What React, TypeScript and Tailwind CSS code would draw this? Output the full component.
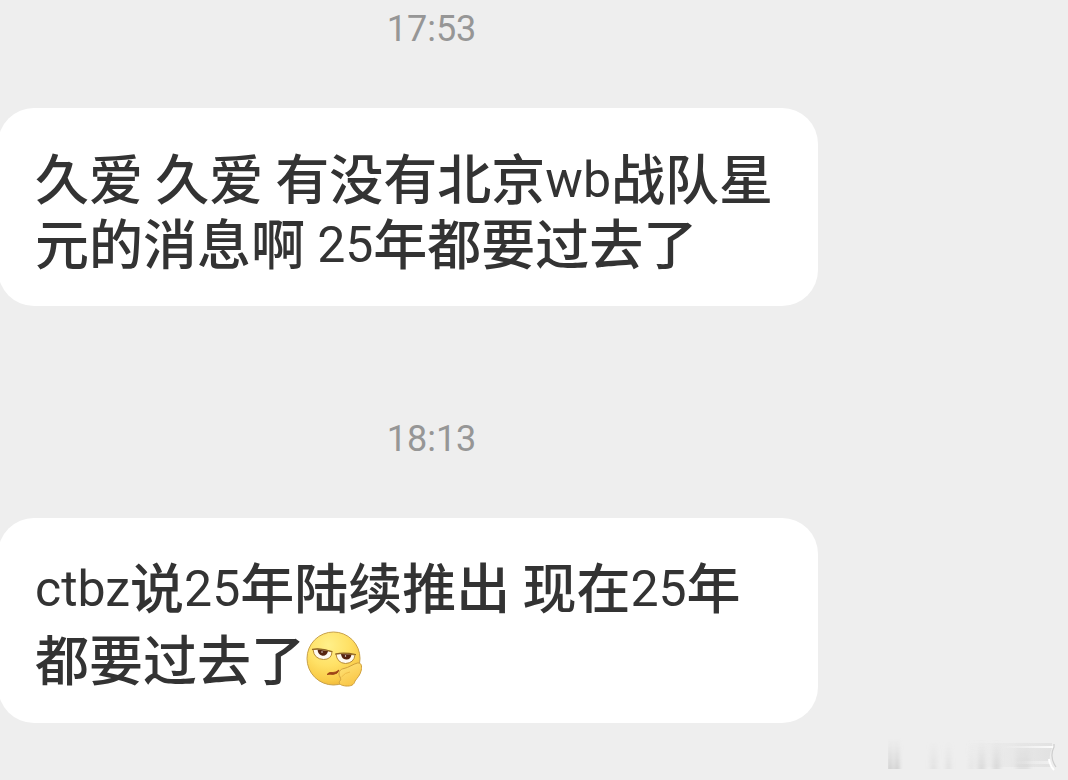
import type { ReactNode } from "react";

function Latin({ children }: { children: ReactNode }) {
  return <span className="align-[3px] font-[Roboto,sans-serif] text-[50px] leading-none font-normal">{children}</span>;
}

function Time({ children }: { children: string }) {
  return (
    <time className="block w-[81%] pr-0.5 text-center font-[Roboto,sans-serif] text-4xl leading-10 text-[#969696]">
      {children}
    </time>
  );
}

function Bubble({ children, className }: { children: ReactNode; className: string }) {
  return (
    <p
      className={`mt-[59px] -ml-0.5 w-[76.8%] rounded-[36px] bg-white pr-9 pl-[37px] text-[54px] font-medium text-[#333333] ${className}`}
    >
      {children}
    </p>
  );
}

function BoredFace() {
  return (
    <svg viewBox="0 0 56 56" role="img" aria-label="Bored face" className="ml-px inline-block size-14 align-[-6px]">
      <defs>
        <radialGradient id="face" cx="0.4" cy="0.25" r="0.78">
          <stop offset="0" stopColor="#fff08a" />
          <stop offset="0.5" stopColor="#ffe166" />
          <stop offset="0.85" stopColor="#f9cb48" />
          <stop offset="1" stopColor="#efb73a" />
        </radialGradient>
        <linearGradient id="hand" x1="0" y1="0" x2="0.5" y2="1">
          <stop offset="0" stopColor="#ffe57c" />
          <stop offset="1" stopColor="#f9c647" />
        </linearGradient>
      </defs>
      <circle cx="27.5" cy="27.5" r="26.5" fill="url(#face)" stroke="#c8a14a" strokeWidth="1" />
      <path d="M7 18.500 Q15 17 26 21 Q25.500 28.500 17.500 28.500 Q8 28 7 18.500Z" fill="#fffaf0" stroke="#b88b35" strokeWidth="1" />
      <path d="M30 23 Q38 21.500 49 24 Q48 32 39.500 32.500 Q31 32 30 23Z" fill="#fffaf0" stroke="#b88b35" strokeWidth="1" />
      <path d="M11.500 18.500 L22 20 Q21 25 16.500 24.800 Q12 24 11.500 18.500Z" fill="#56230f" />
      <path d="M35 23 L45.500 23.500 Q44.500 29 40 28.500 Q35.500 28 35 23Z" fill="#56230f" />
      <circle cx="16" cy="21" r="0.7" fill="#fff" />
      <circle cx="39.500" cy="25" r="0.7" fill="#fff" />
      <path d="M6.500 18.300 Q15 17 26 20.500M29.500 23 Q38 21 49.500 23.500" fill="none" stroke="#8f6526" strokeWidth="1.200" strokeLinecap="round" />
      <path d="M21 43.500 Q23 40.500 27 41.500 Q30 41.500 33 39 Q32 43 27 43.500 Q24 43 21 43.500Z" fill="#9d4216" stroke="#9d4216" strokeWidth="0.800" strokeLinejoin="round" />
      <path
        d="M34 46 C31.500 42 34 38 38 37.500 C43 36.500 47 33 51.500 32 C55.500 31.500 56 35 55.300 39 C54.500 44 51 47 49 50 C48 54 45 55.300 40 55 C35 54.500 32.500 53 33.500 50.500 C35 49 35 48 34 46Z"
        fill="url(#hand)"
        stroke="#d0a03c"
        strokeWidth="1"
      />
      <path d="M35.500 46 Q39 41.500 44 41" fill="none" stroke="#efbd49" strokeWidth="1" />
    </svg>
  );
}

function Watermark() {
  return (
    <svg aria-hidden="true" viewBox="0 0 180 36" className="absolute right-0 bottom-2 h-9 w-[180px]">
      <defs>
        <linearGradient id="fade" x1="0" y1="0" x2="0" y2="1">
          <stop offset="0" stopColor="#ccc" stopOpacity="0" />
          <stop offset="1" stopColor="#b8b8b8" stopOpacity="0.75" />
        </linearGradient>
        <linearGradient id="haze" x1="0" y1="0" x2="1" y2="0">
          <stop offset="0" stopColor="#e2e2e2" stopOpacity="0" />
          <stop offset="1" stopColor="#dedede" stopOpacity="0.8" />
        </linearGradient>
        <linearGradient id="shine" x1="0" y1="0" x2="1" y2="0">
          <stop offset="0" stopColor="#fff" stopOpacity="0" />
          <stop offset="1" stopColor="#fff" stopOpacity="0.9" />
        </linearGradient>
        <filter id="soft" x="-5%" y="-5%" width="110%" height="110%">
          <feGaussianBlur stdDeviation="2 0.5" />
        </filter>
      </defs>
      <path d="M78 7H164V12Q159 22 165 31H78Z" fill="url(#haze)" />
      <g fill="url(#fade)" filter="url(#soft)">
        <rect x="0" y="2" width="4" height="31" />
        <rect x="7" y="2" width="4" height="31" />
        <rect x="42" y="4" width="7" height="29" opacity="0.300" />
        <rect x="58" y="4" width="5" height="29" opacity="0.350" />
        <rect x="81" y="4" width="5" height="29" opacity="0.200" />
        <rect x="90" y="4" width="7" height="29" opacity="0.500" />
        <rect x="105" y="4" width="7" height="29" opacity="0.500" />
        <rect x="128" y="4" width="14" height="29" opacity="0.350" />
      </g>
      <rect x="115" y="10" width="51" height="2" fill="url(#shine)" />
      <rect x="125" y="25" width="37" height="3" fill="url(#shine)" opacity="0.500" />
      <path d="M166 8V11Q161 21 168 31" fill="none" stroke="#cecece" strokeWidth="1.200" />
      <path d="M161 23Q162 30 166 34" fill="none" stroke="#fff" strokeWidth="2" />
    </svg>
  );
}

export default function App() {
  return (
    <main
      lang="zh-CN"
      className="relative min-h-screen overflow-hidden bg-[#eeeeee] pt-[9px] pb-14 font-['Noto_Sans_CJK_SC',sans-serif]"
    >
      <section>
        <Time>17:53</Time>
        <Bubble className="pt-9 pb-8 leading-[65px]">
          久爱 久爱 有没有北京<Latin>wb</Latin>战队星元的消息啊 <Latin>25</Latin>年都要过去了
        </Bubble>
      </section>
      <section className="mt-[113px]">
        <Time>18:13</Time>
        <Bubble className="pt-8 pb-[29px] leading-[72px]">
          <Latin>ctbz</Latin>说<Latin>25</Latin>年陆续推出 现在<Latin>25</Latin>年都要过去了
          <BoredFace />
        </Bubble>
      </section>
      <Watermark />
    </main>
  );
}
